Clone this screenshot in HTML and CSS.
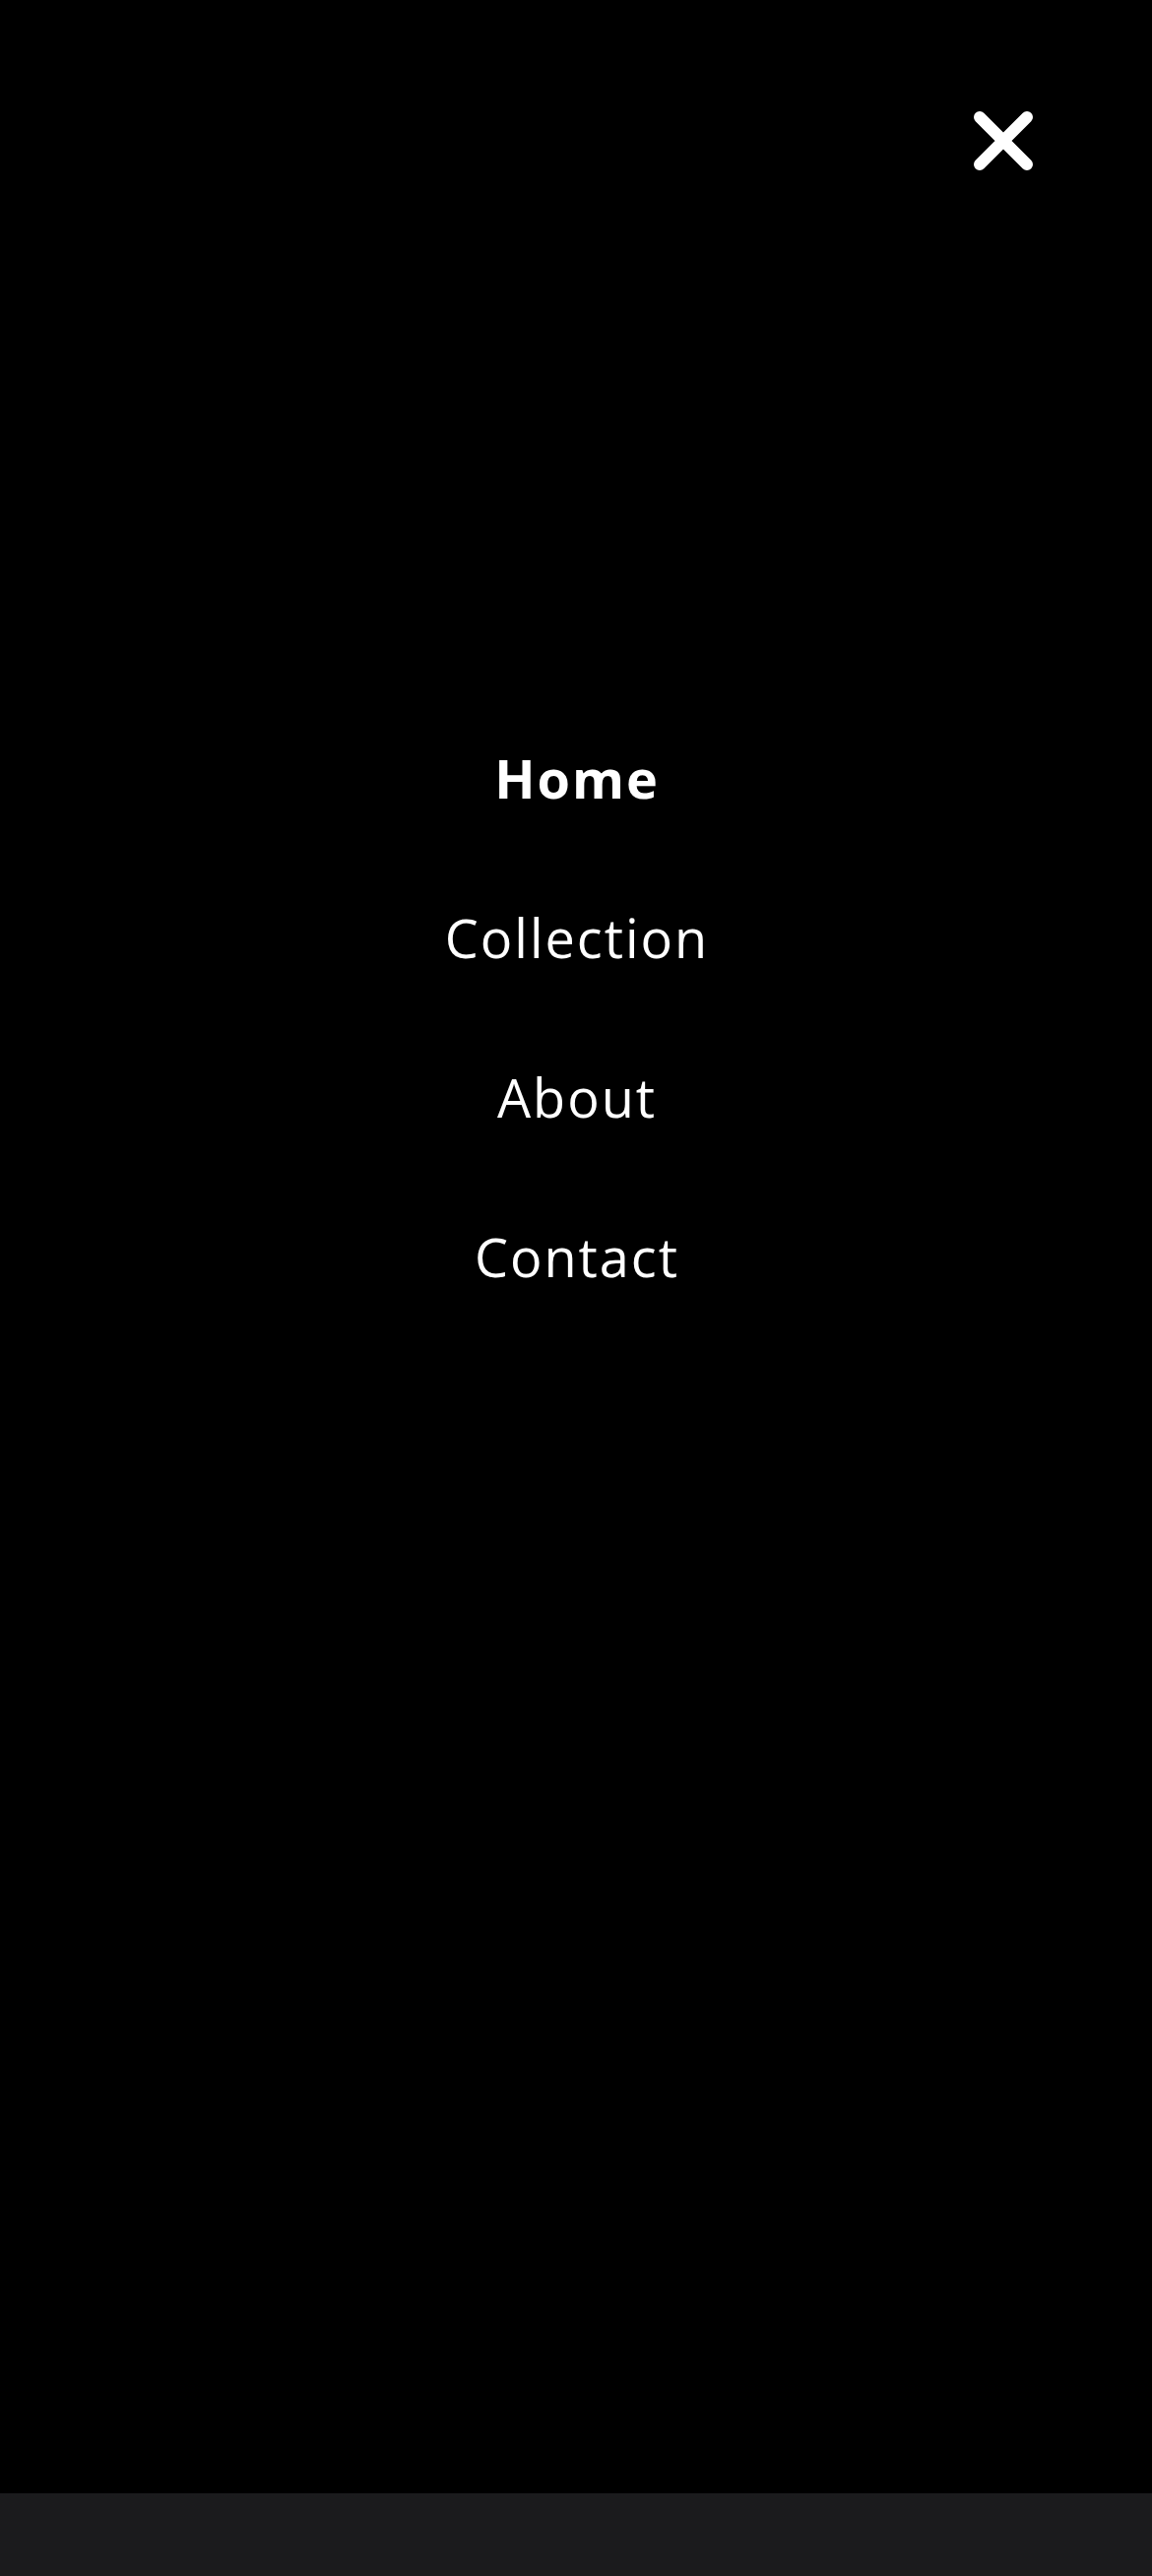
FILE: index.html
```html
<!DOCTYPE html>
<html lang="en">
<head>
<meta charset="utf-8">
<title>Menu</title>
<link rel="stylesheet" href="styles.css">
</head>
<body>
<div class="page">
  <div class="overlay">
    <header class="topbar">
      <button class="close" aria-label="Close menu">
        <svg viewBox="0 0 60 60" width="60" height="60" aria-hidden="true">
          <path d="M6 6 L54 54 M54 6 L6 54" stroke="#fff" stroke-width="12" stroke-linecap="round" fill="none"/>
        </svg>
      </button>
    </header>
    <nav class="menu">
      <a class="menu-item active" href="#">Home</a>
      <a class="menu-item" href="#">Collection</a>
      <a class="menu-item" href="#">About</a>
      <a class="menu-item" href="#">Contact</a>
    </nav>
  </div>
  <div class="bottombar"></div>
</div>
</body>
</html>
```

FILE: styles.css
```css
html, body {
  margin: 0;
  padding: 0;
  background: #000;
}
.page {
  display: flex;
  flex-direction: column;
  height: 2616px;
}
.overlay {
  flex: 1;
  background: #000;
  display: flex;
  flex-direction: column;
}
.topbar {
  display: flex;
  justify-content: flex-end;
  padding: 113px 121px 0 0;
}
.close {
  width: 60px;
  height: 60px;
  padding: 0;
  border: 0;
  background: none;
  display: block;
}
.close svg {
  display: block;
}
.menu {
  display: flex;
  flex-direction: column;
  align-items: center;
  gap: 108px;
  padding-top: 590px;
}
.menu-item {
  font-family: "Open Sans", "Liberation Sans", sans-serif;
  font-size: 54px;
  line-height: 54px;
  letter-spacing: 2px;
  text-indent: 2px;
  color: #fff;
  text-decoration: none;
  font-weight: 400;
}
.menu-item.active {
  font-weight: 700;
}
.bottombar {
  height: 84px;
  background: #1b1b1d;
}
```
